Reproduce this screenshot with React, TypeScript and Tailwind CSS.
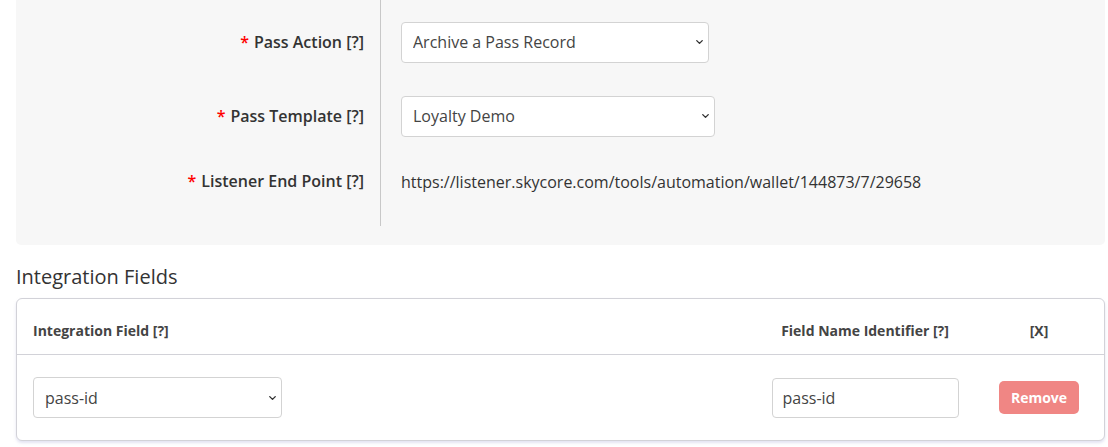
import { ChevronDown } from 'lucide-react'

const font = { fontFamily: '"Open Sans", "Liberation Sans", sans-serif' }

function Select({ value, className }: { value: string; className: string }) {
  return (
    <div className={`relative ${className}`}>
      <select
        defaultValue={value}
        className="h-full w-full appearance-none rounded-[4px] border border-[#d3d3d3] bg-white pl-[11px] pr-8 text-[16px] text-[#444] outline-none"
      >
        <option>{value}</option>
      </select>
      <ChevronDown
        strokeWidth={3}
        className="pointer-events-none absolute right-[4px] top-1/2 h-[11px] w-[11px] -translate-y-1/2 text-[#333]"
      />
    </div>
  )
}

function Label({ text }: { text: string }) {
  return (
    <div className="flex h-full w-[364px] items-center justify-end pr-4 text-[16px] font-semibold text-[#333]">
      <span className="mr-[5px] text-[#f00]">*</span>
      {text}
    </div>
  )
}

export default function App() {
  return (
    <div style={font} className="min-h-screen bg-white pr-[3px] pl-4">
      {/* Settings panel */}
      <div className="rounded-b-[5px] bg-[#f7f7f7] pb-[19px]">
        <div className="flex flex-col">
          <div className="flex h-[84px]">
            <div className="border-r border-[#c8c8c8]">
              <Label text="Pass Action [?]" />
            </div>
            <div className="flex items-center pl-5">
              <Select value="Archive a Pass Record" className="h-[41px] w-[308px]" />
            </div>
          </div>
          <div className="flex h-[64px]">
            <div className="border-r border-[#c8c8c8]">
              <Label text="Pass Template [?]" />
            </div>
            <div className="flex items-center pl-5">
              <Select value="Loyalty Demo" className="h-[41px] w-[314px]" />
            </div>
          </div>
          <div className="flex h-[78px]">
            <div className="border-r border-[#c8c8c8] pb-[12px]">
              <Label text="Listener End Point [?]" />
            </div>
            <div className="flex items-start pl-5 pt-[22px] text-[16px] text-[#333]">
              https://listener.skycore.com/tools/automation/wallet/144873/7/29658
            </div>
          </div>
        </div>
      </div>

      {/* Integration fields */}
      <h2 className="pt-[18px] pb-[7px] text-[20px] leading-[28px] text-[#333]">Integration Fields</h2>
      <div className="rounded-[6px] border border-[#d2d2d8] bg-white shadow-[0_2px_3px_rgba(200,200,230,0.5)]">
        <div className="flex h-[56px] items-center border-b border-[#d2d2d8] px-4 pt-[7px] text-[14px] font-bold text-[#444]">
          <div className="flex-1">Integration Field [?]</div>
          <div className="w-[250px] text-center">Field Name Identifier [?]</div>
          <div className="w-[98px] text-center">[X]</div>
        </div>
        <div className="flex h-[85px] items-center px-4">
          <div className="flex-1">
            <Select value="pass-id" className="h-[41px] w-[249px]" />
          </div>
          <div className="flex w-[250px] justify-center">
            <input
              defaultValue="pass-id"
              className="h-[40px] w-[187px] rounded-[4px] border border-[#d3d3d3] bg-white px-[10px] text-[16px] text-[#444] outline-none"
            />
          </div>
          <div className="flex w-[98px] justify-center">
            <button className="h-[33px] w-[80px] rounded-[5px] bg-[#f08684] text-[14px] font-bold text-white">
              Remove
            </button>
          </div>
        </div>
      </div>
    </div>
  )
}
